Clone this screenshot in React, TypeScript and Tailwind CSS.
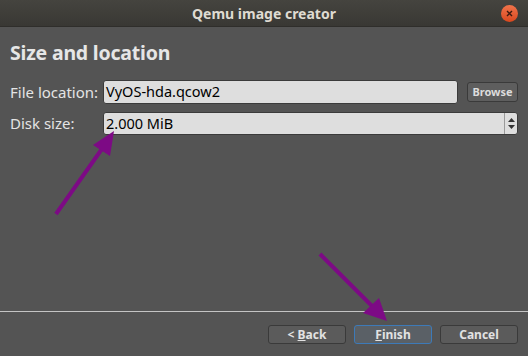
import React from "react";

const font = { fontFamily: '"Noto Sans", "Open Sans", sans-serif' };

export default function App(): JSX.Element {
  return (
    <div
      className="relative flex h-[356px] w-[528px] flex-col overflow-hidden bg-[#545454] text-[#e4e4e4]"
      style={font}
    >
      {/* window title bar */}
      <div className="flex h-[27px] shrink-0 items-center justify-center bg-gradient-to-b from-[#45443f] to-[#393834] border-b border-[#2f2e2b]">
        <span className="text-[14px] font-bold text-[#dfdbd2]">Qemu image creator</span>
        <div className="absolute right-[10px] top-[5px] flex h-[17px] w-[17px] items-center justify-center rounded-full bg-gradient-to-b from-[#f0734a] to-[#d9471d] text-[#3a1a0e]">
          <svg width="7" height="7" viewBox="0 0 7 7">
            <path d="M1 1L6 6M6 1L1 6" stroke="#3b1a10" strokeWidth="1.4" />
          </svg>
        </div>
      </div>

      {/* page */}
      <div className="flex grow flex-col px-[10px]">
        <h1 className="mt-[13px] text-[19.5px] font-bold leading-[26px] tracking-[-0.2px] text-[#e6e6e6]">
          Size and location
        </h1>

        <div className="mt-[14px] flex items-center">
          <span className="w-[93px] text-[15px]">File location:</span>
          <div className="flex h-[24px] w-[355px] items-center rounded-[3px] border border-[#3b3b3b] bg-[#dedede] px-[2px] text-[14.5px] text-black">
            VyOS-hda.qcow2
          </div>
          <button className="ml-[9px] h-[20px] w-[51px] rounded-[3px] border border-[#3a3a3a] bg-[#5e5e5e] text-[11px] font-bold text-[#dcdcdc]">
            Browse
          </button>
        </div>

        <div className="mt-[8px] flex items-center">
          <span className="w-[93px] text-[15px]">Disk size:</span>
          <div className="flex h-[23px] w-[415px] items-stretch rounded-[3px] border border-[#3b3b3b] bg-[#dedede]">
            <div className="flex grow items-center px-[2px] text-[14.5px] text-black">2.000 MiB</div>
            <div className="flex w-[13px] flex-col items-center justify-center gap-[3px] border-l border-[#9a9a9a]">
              <svg width="7" height="4" viewBox="0 0 7 4"><path d="M0 4L3.5 0L7 4Z" fill="#333" /></svg>
              <svg width="7" height="4" viewBox="0 0 7 4"><path d="M0 0L3.5 4L7 0Z" fill="#333" /></svg>
            </div>
          </div>
        </div>
      </div>

      {/* separator + buttons */}
      <div className="h-px shrink-0 bg-[#c4c4c4]" />
      <div className="flex shrink-0 justify-end gap-[8px] pb-[12px] pr-[10px] pt-[13px]">
        <button className="h-[19px] w-[78px] rounded-[3px] border border-[#3a3a3a] bg-[#5b5b5b] text-[12px] font-bold leading-none text-[#e2e2e2]">
          &lt; <span className="underline">B</span>ack
        </button>
        <button className="h-[19px] w-[78px] rounded-[3px] border border-[#3d7ab8] bg-[#5a6066] text-[12px] font-bold leading-none text-[#e2e2e2]">
          <span className="underline">F</span>inish
        </button>
        <button className="h-[19px] w-[78px] rounded-[3px] border border-[#3a3a3a] bg-[#5b5b5b] text-[12px] font-bold leading-none text-[#e2e2e2]">
          Cancel
        </button>
      </div>

      {/* annotation arrows */}
      <svg className="pointer-events-none absolute left-0 top-0" width="528" height="356">
        <line x1="56" y1="214" x2="104" y2="146" stroke="#7d0a85" strokeWidth="4" />
        <path d="M114 131L110 156L93 145Z" fill="#7d0a85" />
        <line x1="320" y1="254" x2="374" y2="308" stroke="#7d0a85" strokeWidth="4" />
        <path d="M387 321L363 313L379 298Z" fill="#7d0a85" />
      </svg>
    </div>
  );
}
